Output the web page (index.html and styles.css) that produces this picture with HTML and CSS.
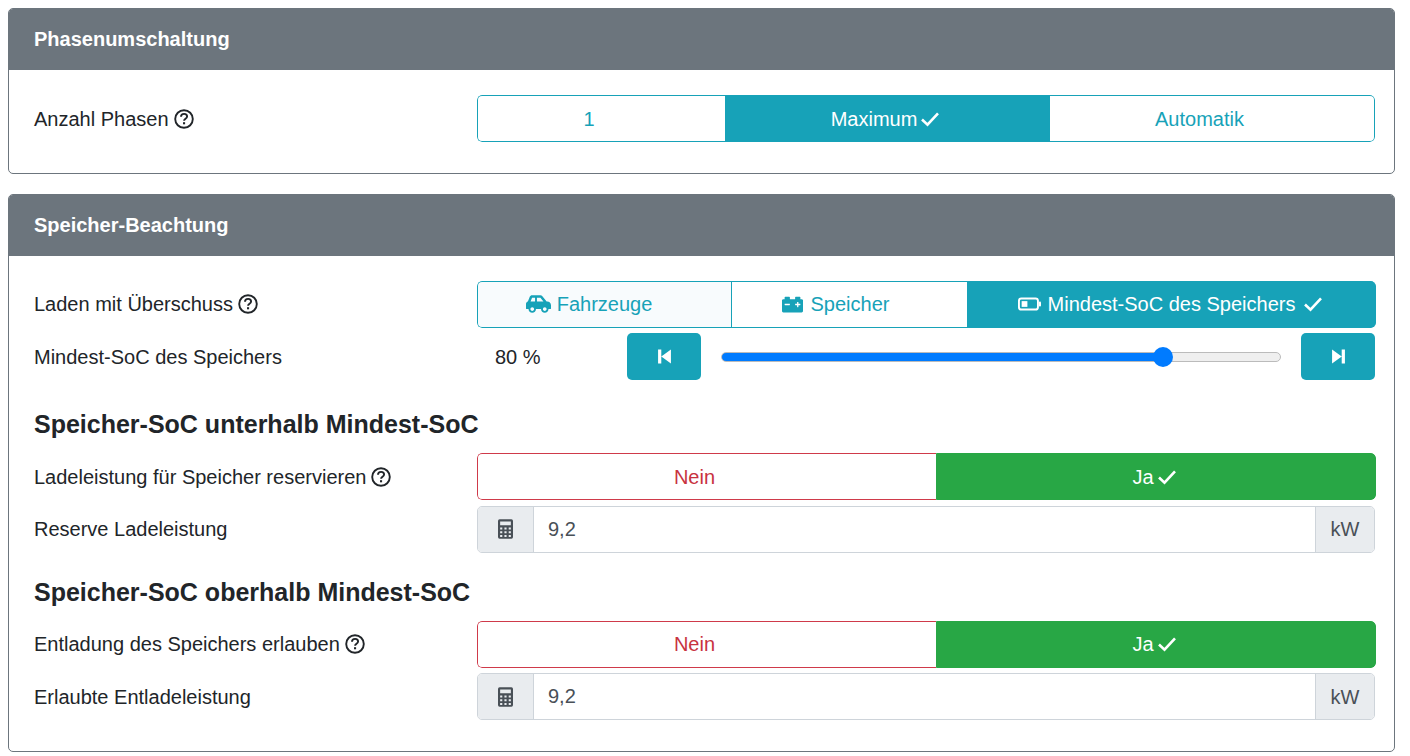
FILE: index.html
```html
<!DOCTYPE html>
<html lang="de">
<head>
    <meta charset="UTF-8">
    <meta name="viewport" content="width=device-width, initial-scale=1.0">
    <title>Ladeeinstellungen</title>
    <link rel="stylesheet" href="styles.css">
</head>
<body>
    <svg class="defs" aria-hidden="true">
        <symbol id="i-check" viewBox="0 0 20 16"><path d="M2 8.5l5.5 5.2L18 2.4" fill="none" stroke="currentColor" stroke-width="2.6"/></symbol>
        <symbol id="i-help" viewBox="0 0 20 20">
            <circle cx="10" cy="10" r="8.8" fill="none" stroke="currentColor" stroke-width="1.9"/>
            <path d="M7 7.8c0-1.8 1.3-2.9 3.1-2.9 1.800 0 3 1.100 3 2.600 0 2.300-3 2.300-3 4.300" fill="none" stroke="currentColor" stroke-width="1.9"/>
            <rect x="9" y="13.200" width="2.100" height="2.100"/>
        </symbol>
        <symbol id="i-car" viewBox="0 0 640 512"><path d="M544 192h-16L419.22 56.020A64.025 64.025 0 0 0 369.240 32H155.330c-26.170 0-49.700 15.930-59.420 40.230L48 194.260C20.440 201.400 0 226.210 0 256v112c0 8.840 7.160 16 16 16h48c0 53.020 42.980 96 96 96s96-42.980 96-96h128c0 53.020 42.980 96 96 96s96-42.980 96-96h48c8.840 0 16-7.160 16-16v-80c0-53.020-42.980-96-96-96zM160 432c-26.470 0-48-21.530-48-48s21.530-48 48-48 48 21.530 48 48-21.530 48-48 48zm72-240H116.930l38.400-96H232v96zm48 0V96h89.240l76.800 96H280zm200 240c-26.470 0-48-21.530-48-48s21.530-48 48-48 48 21.530 48 48-21.530 48-48 48z"/></symbol>
        <symbol id="i-battery" viewBox="0 0 512 512"><path d="M480 128h-32V80c0-8.840-7.160-16-16-16h-96c-8.840 0-16 7.160-16 16v48H192V80c0-8.840-7.160-16-16-16H80c-8.840 0-16 7.160-16 16v48H32c-17.670 0-32 14.330-32 32v256c0 17.670 14.330 32 32 32h448c17.670 0 32-14.330 32-32V160c0-17.670-14.330-32-32-32zM192 264c0 4.420-3.580 8-8 8H72c-4.420 0-8-3.580-8-8v-16c0-4.420 3.580-8 8-8h112c4.420 0 8 3.580 8 8v16zm256 0c0 4.420-3.580 8-8 8h-40v40c0 4.420-3.580 8-8 8h-16c-4.420 0-8-3.580-8-8v-40h-40c-4.420 0-8-3.580-8-8v-16c0-4.420 3.580-8 8-8h40v-40c0-4.420 3.580-8 8-8h16c4.420 0 8 3.580 8 8v40h40c4.420 0 8 3.580 8 8v16z"/></symbol>
        <symbol id="i-soc" viewBox="0 0 24 14">
            <rect x="1" y="1.200" width="19.800" height="11.600" rx="2.500" fill="none" stroke="currentColor" stroke-width="2"/>
            <rect x="3.800" y="4" width="6" height="6"/>
            <rect x="21.800" y="4.500" width="2.200" height="5" rx="1"/>
        </symbol>
        <symbol id="i-calc" viewBox="0 0 14 18"><path fill-rule="evenodd" d="M1.500 0h11A1.500 1.500 0 0 1 14 1.500v15a1.500 1.500 0 0 1-1.500 1.500h-11A1.500 1.500 0 0 1 0 16.500v-15A1.500 1.500 0 0 1 1.500 0zM2 2v3.500h10V2zM2 7.500v2h2v-2zM6 7.500v2h2v-2zM10 7.500v2h2v-2zM2 11v2h2v-2zM6 11v2h2v-2zM10 11v2h2v-2zM2 14.500v2h2v-2zM6 14.500v2h2v-2zM10 14.500v2h2v-2z"/></symbol>
        <symbol id="i-prev" viewBox="0 0 12 14"><path d="M0 .5h3v13H0zM3 7l9-6.500v13z"/></symbol>
        <symbol id="i-next" viewBox="0 0 12 14"><path d="M12 .5H9v13h3zM9 7L0 .5v13z"/></symbol>
    </svg>

    <section class="card">
        <h2 class="card-header">Phasenumschaltung</h2>
        <div class="card-body">
            <div class="row">
                <div class="label">Anzahl Phasen <svg class="help"><use href="#i-help"/></svg></div>
                <div class="btn-group phases">
                    <div class="btn info">1<svg class="check ghost"><use href="#i-check"/></svg></div>
                    <div class="btn info active">Maximum<svg class="check"><use href="#i-check"/></svg></div>
                    <div class="btn info">Automatik<svg class="check ghost"><use href="#i-check"/></svg></div>
                </div>
            </div>
        </div>
    </section>

    <section class="card">
        <h2 class="card-header">Speicher-Beachtung</h2>
        <div class="card-body">
            <div class="row">
                <div class="label">Laden mit Überschuss <svg class="help"><use href="#i-help"/></svg></div>
                <div class="btn-group surplus wide">
                    <div class="btn info tinted"><svg class="ico-car"><use href="#i-car"/></svg>Fahrzeuge<svg class="check ghost"><use href="#i-check"/></svg></div>
                    <div class="btn info"><svg class="ico-battery"><use href="#i-battery"/></svg>Speicher<svg class="check ghost"><use href="#i-check"/></svg></div>
                    <div class="btn info active"><svg class="ico-soc"><use href="#i-soc"/></svg>Mindest-SoC des Speichers<svg class="check spaced"><use href="#i-check"/></svg></div>
                </div>
            </div>
            <div class="row row-slider">
                <div class="label">Mindest-SoC des Speichers</div>
                <div class="slider">
                    <span class="slider-value">80 %</span>
                    <div class="step"><svg class="ico-step"><use href="#i-prev"/></svg></div>
                    <input class="range" type="range" min="0" max="100" value="80">
                    <div class="step"><svg class="ico-step"><use href="#i-next"/></svg></div>
                </div>
            </div>

            <h3 class="section-title">Speicher-SoC unterhalb Mindest-SoC</h3>
            <div class="row">
                <div class="label">Ladeleistung für Speicher reservieren <svg class="help"><use href="#i-help"/></svg></div>
                <div class="btn-group yesno wide">
                    <div class="btn danger">Nein<svg class="check ghost"><use href="#i-check"/></svg></div>
                    <div class="btn success">Ja<svg class="check"><use href="#i-check"/></svg></div>
                </div>
            </div>
            <div class="row">
                <div class="label">Reserve Ladeleistung</div>
                <div class="input-group">
                    <div class="addon addon-left"><svg class="ico-calc"><use href="#i-calc"/></svg></div>
                    <div class="input">9,2</div>
                    <div class="addon addon-right">kW</div>
                </div>
            </div>

            <h3 class="section-title">Speicher-SoC oberhalb Mindest-SoC</h3>
            <div class="row">
                <div class="label">Entladung des Speichers erlauben <svg class="help"><use href="#i-help"/></svg></div>
                <div class="btn-group yesno wide">
                    <div class="btn danger">Nein<svg class="check ghost"><use href="#i-check"/></svg></div>
                    <div class="btn success">Ja<svg class="check"><use href="#i-check"/></svg></div>
                </div>
            </div>
            <div class="row">
                <div class="label">Erlaubte Entladeleistung</div>
                <div class="input-group">
                    <div class="addon addon-left"><svg class="ico-calc"><use href="#i-calc"/></svg></div>
                    <div class="input">9,2</div>
                    <div class="addon addon-right">kW</div>
                </div>
            </div>
        </div>
    </section>
</body>
</html>
```

FILE: styles.css
```css
*{
    box-sizing: border-box;
    margin: 0;
    padding: 0;
}
body{
    padding: 8px 15px 0 8px;
    background: #fff;
    color: #212529;
    font-family: "Liberation Sans", Arial, sans-serif;
    font-size: 20px;
    line-height: 30px;
}
svg{
    fill: currentColor;
}
.defs{
    display: none;
}
.card{
    border: 1px solid #6c757d;
    border-radius: 5px;
    margin-bottom: 20px;
    overflow: hidden;
}
.card-header{
    height: 61px;
    padding: 15px 25px;
    background: #6c757d;
    color: #fff;
    font-size: 20px;
    line-height: 30px;
    font-weight: bold;
}
.card-body{
    padding: 25px 19px 25.6px 25px;
}
.row{
    display: grid;
    grid-template-columns: 443px 1fr;
    align-items: center;
    height: 47px;
    margin-bottom: 5.4px;
}
.row-slider{
    margin-bottom: 29px;
}
.label{
    display: flex;
    align-items: center;
    gap: 5px;
}
.help{
    width: 20px;
    height: 20px;
}
.section-title{
    margin: 24.2px 0 14px;
    font-size: 25px;
    line-height: 30px;
    font-weight: bold;
}

/* button groups */
.btn-group{
    display: grid;
    height: 47px;
    border-radius: 5px;
    overflow: hidden;
}
.btn-group.wide{
    margin-right: -1px;
}
.phases{
    grid-template-columns: 248px 325px 1fr;
}
.surplus{
    grid-template-columns: 254px 237px 1fr;
}
.yesno{
    grid-template-columns: 459px 1fr;
}
.btn{
    display: flex;
    align-items: center;
    justify-content: center;
    border: 1px solid;
}
.btn-group .btn:first-child{
    border-radius: 5px 0 0 5px;
}
.btn-group .btn:last-child{
    border-radius: 0 5px 5px 0;
}
.btn.info{
    color: #17a2b8;
    border-color: #17a2b8;
}
.btn.info + .btn.info{
    border-left: 0;
}
.phases .btn.info:first-child{
    border-right: 0;
}
.surplus .btn.info:first-child{
    border-right: 0;
}
.surplus .btn.info:nth-child(2){
    border-left: 1px solid #17a2b8;
}
.btn.tinted{
    background: #f8fbfd;
}
.btn.info.active{
    background: #17a2b8;
    color: #fff;
}
.btn.danger{
    color: #c8323f;
    border-color: #cf3a4a;
    border-right: 0;
}
.btn.success{
    background: #28a745;
    border-color: #28a745;
    color: #fff;
}
.check{
    width: 20px;
    height: 16px;
    margin: 0 3px;
}
.check.ghost{
    margin-right: 2px;
    visibility: hidden;
}
.surplus .check.ghost{
    margin-right: 5px;
}
.surplus .tinted .check.ghost{
    margin-right: 8px;
}
.check.spaced{
    margin: 0 2px 0 8px;
}
.ico-car{
    width: 25px;
    height: 20px;
    margin-right: 6px;
}
.ico-battery{
    width: 21px;
    height: 21px;
    margin-right: 8px;
}
.ico-soc{
    width: 23px;
    height: 14px;
    margin-right: 7px;
}

/* slider row */
.slider{
    display: flex;
    align-items: center;
    height: 47px;
}
.slider-value{
    width: 150px;
    padding-left: 18px;
}
.step{
    display: flex;
    align-items: center;
    justify-content: center;
    flex: none;
    width: 74px;
    height: 47px;
    border-radius: 5px;
    background: #17a2b8;
    color: #fff;
}
.ico-step{
    width: 13px;
    height: 15px;
}
.range{
    flex: 1;
    min-width: 0;
    height: 20px;
    margin: 0 20px;
    background: transparent;
    -webkit-appearance: none;
    appearance: none;
}
.range::-webkit-slider-runnable-track{
    height: 10px;
    border: 1px solid #bbb;
    border-radius: 5px;
    background: linear-gradient(to right, #007bff 80%, #efefef 80%);
}
.range::-webkit-slider-thumb{
    -webkit-appearance: none;
    width: 20px;
    height: 20px;
    margin-top: -6px;
    border-radius: 50%;
    background: #007bff;
    transform: translateX(1px);
}

/* input groups */
.input-group{
    display: flex;
    height: 47px;
    border: 1px solid #ced4da;
    border-radius: 5px;
    overflow: hidden;
    color: #495057;
}
.addon{
    display: flex;
    align-items: center;
    justify-content: center;
    background: #e9ecef;
}
.addon-left{
    width: 56px;
    border-right: 1px solid #ced4da;
}
.addon-right{
    width: 59px;
    border-left: 1px solid #ced4da;
}
.input{
    flex: 1;
    padding: 7px 14px;
}
.ico-calc{
    width: 15px;
    height: 20px;
}
```
